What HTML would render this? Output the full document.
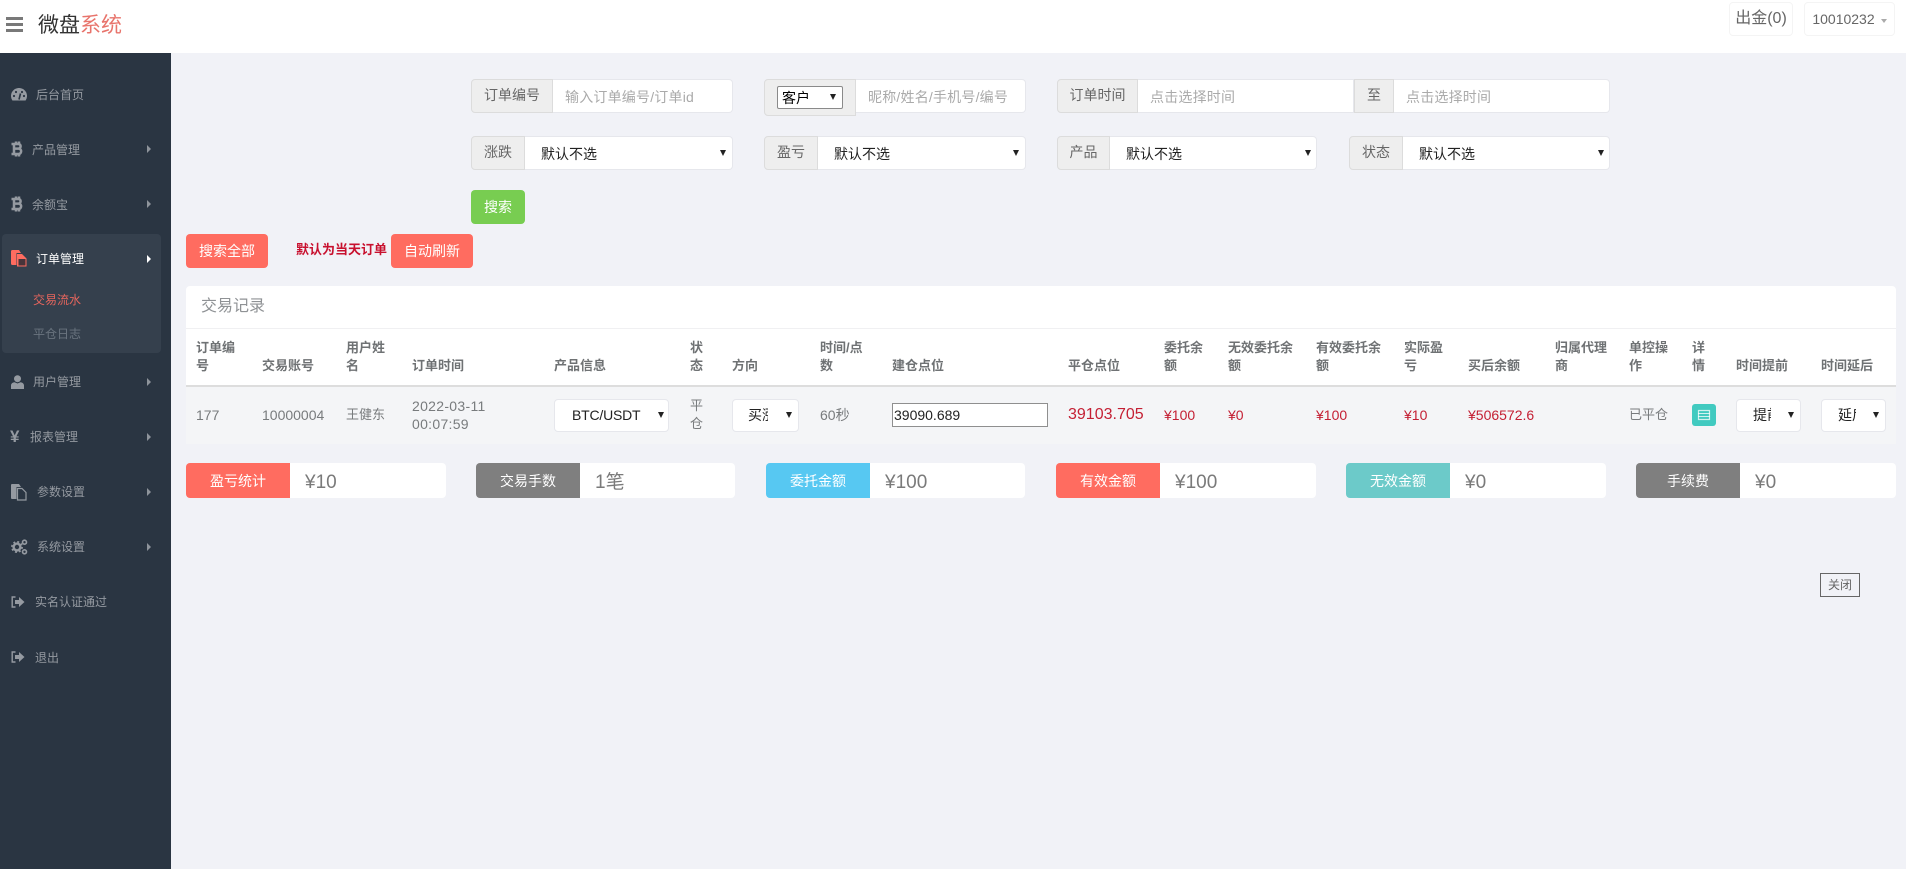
<!DOCTYPE html>
<html lang="zh-CN">
<head>
<meta charset="utf-8">
<title>微盘系统</title>
<style>
*{box-sizing:border-box}
html,body{margin:0;padding:0;width:1906px;height:869px;overflow:hidden;background:#f1f2f7;font-family:"Liberation Sans","Noto Sans CJK SC",sans-serif;color:#676a6c}
.a{position:absolute}
#top{left:0;top:0;width:1906px;height:53px;background:#fff}
.bar{left:6px;width:17px;height:3px;background:#797979}
#logo{left:38px;top:11px;font-size:21px;line-height:30px;color:#333;white-space:nowrap}
#logo span{color:#e8746c}
.tb{top:2px;height:34px;border:1px solid #f4f4f4;border-radius:4px;background:#fff;color:#666;text-align:center;line-height:32px}
#side{left:0;top:53px;width:171px;height:816px;background:#2a3542}
#act{left:2px;top:234px;width:159px;height:119px;background:#35404d;border-radius:4px}
.m{font-size:12px;line-height:16px;color:#959aa1;white-space:nowrap}
.ic{color:#959aa1}
.tr{left:147px;width:0;height:0;border-left:4px solid #8e949b;border-top:4px solid transparent;border-bottom:4px solid transparent}
.ad{background:#eee;border:1px solid #dcdcdc;border-radius:4px 0 0 4px;font-size:14px;color:#666;text-align:center;line-height:31px;white-space:nowrap}
input,select{font-family:"Liberation Sans","Noto Sans CJK SC",sans-serif}
.in{background:#fff;border:1px solid #e6e7ec;border-left:0;border-radius:0 4px 4px 0;font-size:14px;padding:2px 0 0 12px;outline:0;color:#555;letter-spacing:.2px}
.in::placeholder{color:#aaa;opacity:1}
.sel{appearance:none;-webkit-appearance:none;background:#fff;border:1px solid #e6e7ec;border-left:0;border-radius:0 4px 4px 0;font-size:14px;color:#222;padding:2px 20px 0 16px;outline:0}
.arr{width:0;height:0;border-left:3.5px solid transparent;border-right:3.5px solid transparent;border-top:6px solid #222}
.btn{border-radius:4px;color:#fff;font-size:14px;text-align:center;line-height:34px;white-space:nowrap}
#panel{left:186px;top:286px;width:1710px;height:158px;background:#fff;border-radius:4px 4px 0 0}
#ttl{left:201px;top:296px;font-size:16px;line-height:22px;color:#8f9295}
table{position:absolute;left:186px;top:328px;width:1710px;table-layout:fixed;border-collapse:collapse;border-top:1px solid #f0f0f2}
th{font-size:13px;line-height:18px;font-weight:700;color:#6f7274;text-align:left;vertical-align:bottom;padding:9px 6px 10px 10px;height:57px;border-bottom:2px solid #ddd}
td{font-size:13px;line-height:18px;color:#787b7d;background:#f4f5f7;height:58px;padding:0 6px 0 10px;vertical-align:middle}
td.n{font-size:14px}
td.r{font-size:14px;color:#c41f33}
.rs{appearance:none;-webkit-appearance:none;background:#fff;border:1px solid #e6e7ec;border-radius:4px;font-size:14px;color:#222;height:33px;outline:0;display:block}
.lab{height:35px;border-radius:4px 0 0 4px;color:#fff;font-size:14px;text-align:center;line-height:36px;white-space:nowrap}
.val{height:35px;background:#fff;border-radius:0 4px 4px 0;font-size:19px;line-height:39px;color:#7a7a7a;padding-left:15px;white-space:nowrap}
</style>
</head>
<body>
<div class="a" id="top"></div>
<div class="a bar" style="top:17px"></div>
<div class="a bar" style="top:23px"></div>
<div class="a bar" style="top:29px"></div>
<div class="a" id="logo">微盘<span>系统</span></div>
<div class="a tb" style="left:1729px;width:64px;font-size:16px">出金(0)</div>
<div class="a tb" style="left:1804px;width:91px;font-size:14px;padding-right:12px">10010232</div>
<div class="a" style="left:1881px;top:19px;width:0;height:0;border-left:3px solid transparent;border-right:3px solid transparent;border-top:4px solid #aaa"></div>

<div class="a" id="side"></div>
<div class="a" id="act"></div>

<svg class="a" style="left:11px;top:88px" width="16" height="13" viewBox="0 0 16 13"><path d="M1.4 12.5A8 8 0 1 1 14.6 12.5Z" fill="#959aa1"/><circle cx="3" cy="8" r="1.1" fill="#2a3542"/><circle cx="5" cy="4" r="1.1" fill="#2a3542"/><circle cx="11" cy="4" r="1.1" fill="#2a3542"/><circle cx="13" cy="8" r="1.1" fill="#2a3542"/><path d="M8 11.5L9.5 5.5" stroke="#2a3542" stroke-width="1.6"/></svg>
<div class="a m" style="left:36px;top:87px">后台首页</div>

<svg class="a" style="left:11px;top:141px" width="12" height="16" viewBox="0 0 12 16"><path d="M3 3H7.5C10.3 3 10.3 7.6 7.5 7.6H3M7.5 7.6C11 7.6 11 13 7.5 13H3M3 3V13M.5 3H3M.5 13H3M5 .5V3M8 .5V3M5 13V15.5M8 13V15.5" fill="none" stroke="#959aa1" stroke-width="2.5"/></svg>
<div class="a m" style="left:32px;top:142px">产品管理</div>
<div class="a tr" style="top:145px"></div>

<svg class="a" style="left:11px;top:196px" width="12" height="16" viewBox="0 0 12 16"><path d="M3 3H7.5C10.3 3 10.3 7.6 7.5 7.6H3M7.5 7.6C11 7.6 11 13 7.5 13H3M3 3V13M.5 3H3M.5 13H3M5 .5V3M8 .5V3M5 13V15.5M8 13V15.5" fill="none" stroke="#959aa1" stroke-width="2.5"/></svg>
<div class="a m" style="left:32px;top:197px">余额宝</div>
<div class="a tr" style="top:200px"></div>

<svg class="a" style="left:11px;top:250px" width="16" height="17" viewBox="0 0 16 17"><path d="M0 1.5A1.5 1.5 0 0 1 1.5 0H8L10 3H5.5V15H1.5A1.5 1.5 0 0 1 0 13.5Z" fill="#ff6c60"/><path d="M6 4H11L15.5 8.5V16.5H6Z" fill="#ff6c60"/><path d="M7.5 9H14.5V15.5H7.5Z" fill="#47343a"/></svg>
<div class="a m" style="left:36px;top:251px;color:#fff">订单管理</div>
<div class="a tr" style="top:255px;border-left-color:#fff"></div>
<div class="a m" style="left:33px;top:292px;color:#e5655d">交易流水</div>
<div class="a m" style="left:33px;top:326px;color:#6a747f">平仓日志</div>

<svg class="a" style="left:11px;top:375px" width="13" height="14" viewBox="0 0 13 14"><circle cx="6.5" cy="3.7" r="3.5" fill="#959aa1"/><path d="M0 14V10.5C0 8.5 1.5 7.5 3.5 7.2L6.5 8.5L9.5 7.2C11.5 7.5 13 8.5 13 10.5V14Z" fill="#959aa1"/></svg>
<div class="a m" style="left:33px;top:374px">用户管理</div>
<div class="a tr" style="top:378px"></div>

<div class="a ic" style="left:10px;top:427px;font-size:17px;line-height:20px;font-weight:700">¥</div>
<div class="a m" style="left:30px;top:429px">报表管理</div>
<div class="a tr" style="top:433px"></div>

<svg class="a" style="left:11px;top:484px" width="16" height="17" viewBox="0 0 16 17"><path d="M0 1A1 1 0 0 1 1 0H8L10 3H5.5V15H1A1 1 0 0 1 0 14Z" fill="#959aa1"/><path d="M6.5 4.5H11L15 8.5V16H6.5Z" fill="none" stroke="#959aa1" stroke-width="1.2"/></svg>
<div class="a m" style="left:37px;top:484px">参数设置</div>
<div class="a tr" style="top:488px"></div>

<svg class="a" style="left:11px;top:539px" width="17" height="16" viewBox="0 0 17 16"><circle cx="6" cy="8" r="3.4" fill="none" stroke="#959aa1" stroke-width="2.4"/><circle cx="6" cy="8" r="5.2" fill="none" stroke="#959aa1" stroke-width="1.5" stroke-dasharray="2 2.1"/><circle cx="13.5" cy="3.2" r="2" fill="none" stroke="#959aa1" stroke-width="1.6"/><circle cx="13.5" cy="12.8" r="2" fill="none" stroke="#959aa1" stroke-width="1.6"/></svg>
<div class="a m" style="left:37px;top:539px">系统设置</div>
<div class="a tr" style="top:543px"></div>

<svg class="a" style="left:11px;top:596px" width="14" height="12" viewBox="0 0 14 12"><path d="M4.5 1H1.2V11H4.5" fill="none" stroke="#959aa1" stroke-width="1.4"/><path d="M4 4H8V1L13.5 6L8 11V8H4Z" fill="#959aa1"/></svg>
<div class="a m" style="left:35px;top:594px">实名认证通过</div>

<svg class="a" style="left:11px;top:651px" width="14" height="12" viewBox="0 0 14 12"><path d="M4.5 1H1.2V11H4.5" fill="none" stroke="#959aa1" stroke-width="1.4"/><path d="M4 4H8V1L13.5 6L8 11V8H4Z" fill="#959aa1"/></svg>
<div class="a m" style="left:35px;top:650px">退出</div>

<!-- filters row 1 -->
<div class="a ad" style="left:471px;top:79px;width:82px;height:34px">订单编号</div>
<input class="a in" style="left:553px;top:79px;width:180px;height:34px" placeholder="输入订单编号/订单id">
<div class="a ad" style="left:764px;top:79px;width:92px;height:37px"></div>
<select class="a" style="left:777px;top:86px;width:66px;height:23px;font-size:14px;color:#000;background:#fff;border:1px solid #8a8a8a;border-radius:2px;appearance:none;-webkit-appearance:none;padding:0 0 0 4px;outline:0"><option>客户</option></select>
<div class="a arr" style="left:830px;top:94px"></div>
<input class="a in" style="left:856px;top:79px;width:170px;height:34px" placeholder="昵称/姓名/手机号/编号">
<div class="a ad" style="left:1057px;top:79px;width:81px;height:34px">订单时间</div>
<input class="a in" style="left:1138px;top:79px;width:216px;height:34px;border-radius:0" placeholder="点击选择时间">
<div class="a ad" style="left:1354px;top:79px;width:40px;height:34px;border-radius:0">至</div>
<input class="a in" style="left:1394px;top:79px;width:216px;height:34px" placeholder="点击选择时间">

<!-- filters row 2 -->
<div class="a ad" style="left:471px;top:136px;width:54px;height:34px">涨跌</div>
<select class="a sel" style="left:525px;top:136px;width:208px;height:34px"><option>默认不选</option></select>
<div class="a arr" style="left:720px;top:150px"></div>
<div class="a ad" style="left:764px;top:136px;width:54px;height:34px">盈亏</div>
<select class="a sel" style="left:818px;top:136px;width:208px;height:34px"><option>默认不选</option></select>
<div class="a arr" style="left:1013px;top:150px"></div>
<div class="a ad" style="left:1057px;top:136px;width:53px;height:34px">产品</div>
<select class="a sel" style="left:1110px;top:136px;width:207px;height:34px"><option>默认不选</option></select>
<div class="a arr" style="left:1305px;top:150px"></div>
<div class="a ad" style="left:1349px;top:136px;width:54px;height:34px">状态</div>
<select class="a sel" style="left:1403px;top:136px;width:207px;height:34px"><option>默认不选</option></select>
<div class="a arr" style="left:1598px;top:150px"></div>

<div class="a btn" style="left:471px;top:190px;width:54px;height:34px;background:#78cd51">搜索</div>
<div class="a btn" style="left:186px;top:234px;width:82px;height:34px;background:#ff6c60">搜索全部</div>
<div class="a" style="left:296px;top:241px;font-size:13px;line-height:18px;font-weight:700;color:#c8102e;white-space:nowrap">默认为当天订单</div>
<div class="a btn" style="left:391px;top:234px;width:82px;height:34px;background:#ff6c60">自动刷新</div>

<!-- table -->
<div class="a" id="panel"></div>
<div class="a" id="ttl">交易记录</div>
<table>
<colgroup>
<col style="width:66px"><col style="width:84px"><col style="width:66px"><col style="width:142px"><col style="width:136px"><col style="width:42px"><col style="width:88px"><col style="width:72px"><col style="width:176px"><col style="width:96px"><col style="width:64px"><col style="width:88px"><col style="width:88px"><col style="width:64px"><col style="width:87px"><col style="width:74px"><col style="width:63px"><col style="width:44px"><col style="width:85px"><col style="width:85px">
</colgroup>
<tr>
<th>订单编<br>号</th><th>交易账号</th><th>用户姓<br>名</th><th>订单时间</th><th>产品信息</th><th>状<br>态</th><th>方向</th><th>时间/点<br>数</th><th>建仓点位</th><th>平仓点位</th><th>委托余<br>额</th><th>无效委托余<br>额</th><th>有效委托余<br>额</th><th>实际盈<br>亏</th><th>买后余额</th><th>归属代理<br>商</th><th>单控操<br>作</th><th>详<br>情</th><th>时间提前</th><th>时间延后</th>
</tr>
<tr>
<td class="n">177</td>
<td class="n">10000004</td>
<td>王健东</td>
<td class="n" style="letter-spacing:.3px">2022-03-11<br>00:07:59</td>
<td><select class="rs" style="width:115px;padding:0 24px 0 17px;letter-spacing:-.2px"><option>BTC/USDT</option></select></td>
<td>平<br>仓</td>
<td><select class="rs" style="width:67px;padding:0 30px 0 15px"><option>买涨</option></select></td>
<td class="n">60秒</td>
<td><input value="39090.689" style="display:block;width:156px;height:24px;border:1px solid #8f8f8f;background:#fff;font-size:14px;color:#222;padding:0 1px;outline:0"></td>
<td class="r" style="font-size:16px">39103.705</td>
<td class="r">¥100</td>
<td class="r">¥0</td>
<td class="r">¥100</td>
<td class="r">¥10</td>
<td class="r">¥506572.6</td>
<td></td>
<td>已平仓</td>
<td><svg width="24" height="22" viewBox="0 0 24 22" style="display:block"><rect width="24" height="22" rx="3" fill="#41cac0"/><rect x="6.5" y="6.5" width="11" height="9" fill="none" stroke="#fff" stroke-opacity=".75" stroke-width="1.2"/><path d="M6 9.5H18M6 12.5H18" stroke="#fff" stroke-opacity=".75" stroke-width="1"/></svg></td>
<td><select class="rs" style="width:65px;padding:0 29px 0 16px"><option>提前</option></select></td>
<td><select class="rs" style="width:65px;padding:0 29px 0 16px"><option>延后</option></select></td>
</tr>
</table>
<div class="a arr" style="left:658px;top:412px"></div>
<div class="a arr" style="left:786px;top:412px"></div>
<div class="a arr" style="left:1788px;top:412px"></div>
<div class="a arr" style="left:1873px;top:412px"></div>

<!-- stats -->
<div class="a lab" style="left:186px;top:463px;width:104px;background:#ff6c60">盈亏统计</div>
<div class="a val" style="left:290px;top:463px;width:156px">¥10</div>
<div class="a lab" style="left:476px;top:463px;width:104px;background:#7f7f7f">交易手数</div>
<div class="a val" style="left:580px;top:463px;width:155px">1笔</div>
<div class="a lab" style="left:766px;top:463px;width:104px;background:#57c8f2">委托金额</div>
<div class="a val" style="left:870px;top:463px;width:155px">¥100</div>
<div class="a lab" style="left:1056px;top:463px;width:104px;background:#ff6c60">有效金额</div>
<div class="a val" style="left:1160px;top:463px;width:156px">¥100</div>
<div class="a lab" style="left:1346px;top:463px;width:104px;background:#6ccac9">无效金额</div>
<div class="a val" style="left:1450px;top:463px;width:156px">¥0</div>
<div class="a lab" style="left:1636px;top:463px;width:104px;background:#7f7f7f">手续费</div>
<div class="a val" style="left:1740px;top:463px;width:156px">¥0</div>

<div class="a" style="left:1820px;top:573px;width:40px;height:24px;border:1px solid #666;font-size:12px;line-height:22px;text-align:center;color:#666;background:#f1f2f7">关闭</div>
</body>
</html>
